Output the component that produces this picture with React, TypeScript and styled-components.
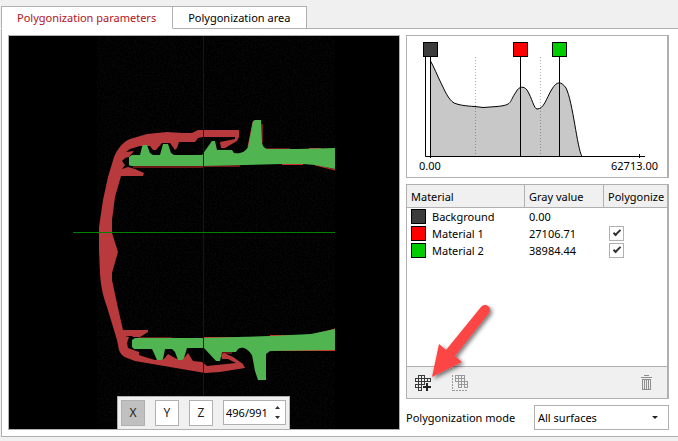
import React, { useState } from "react";
import styled, { createGlobalStyle } from "styled-components";

const LINE = "#b0b0b0";

const Global = createGlobalStyle`
  *, *::before, *::after { box-sizing: border-box; }
  html, body, #root { height: 100%; }
  body { margin: 0; background: #f0f0f0; color: #000; }
  body, button, input, select { font: 11px/16px "Noto Sans", "Open Sans", sans-serif; }
`;

const Page = styled.div`
  min-height: 100%;
  display: flex;
  flex-direction: column;
  padding: 6px 0 4px 1px;
`;

const Tabs = styled.div`
  display: flex;
  &::after { content: ""; flex: 1; border-bottom: 1px solid ${LINE}; }
`;

const Tab = styled.button<{ $active?: boolean }>`
  height: 23px;
  padding: 0 16px 0 15px;
  background: #fff;
  color: ${(p) => (p.$active ? "#b5121b" : "#000")};
  border: 1px solid ${LINE};
  border-left-width: ${(p) => (p.$active ? "1px" : "0")};
  border-bottom-color: ${(p) => (p.$active ? "#fff" : LINE)};
`;

const Panel = styled.main`
  flex: 1;
  display: grid;
  grid-template-columns: minmax(0, 392fr) minmax(0, 263fr);
  gap: 6px;
  padding: 6px 9px 6px 6px;
  background: #fff;
  border: solid ${LINE};
  border-width: 0 0 1px 1px;
`;

const Viewer = styled.section`
  display: flex;
  position: relative;
  background: #000;
  border: 1px solid ${LINE};
`;

const Slice = styled.svg`
  display: block;
  width: 100%;
  height: 100%;
`;

const AxisBar = styled.div`
  position: absolute;
  left: 108px;
  bottom: 0;
  display: flex;
  gap: 10px;
  padding: 3px;
  background: #f0f0f0;
  border: 1px solid ${LINE};
  border-bottom: 0;
`;

const AxisButton = styled.button<{ $on: boolean }>`
  width: 24px;
  height: 26px;
  padding: 0;
  font-size: 12px;
  color: #222;
  border: 1px solid ${LINE};
  background: ${(p) => (p.$on ? "#c0c0c0" : "#fff")};
`;

const Spinner = styled.div`
  display: flex;
  height: 25px;
  background: #fff;
  border: 1px solid ${LINE};
`;

const SpinInput = styled.input`
  width: 45px;
  padding: 0 0 0 2px;
  border: 0;
  outline: 0;
  background: transparent;
`;

const SpinButtons = styled.div`
  display: flex;
  flex-direction: column;
  justify-content: center;
  width: 16px;
`;

const SpinButton = styled.button`
  display: flex;
  align-items: center;
  justify-content: center;
  height: 10px;
  padding: 0;
  border: 0;
  background: none;
`;

const Side = styled.div`
  display: flex;
  flex-direction: column;
  gap: 6px;
`;

const Histogram = styled.section`
  border: 1px solid ${LINE};
  border-right-width: 2px;
  padding-bottom: 3px;
`;

const Plot = styled.svg`
  display: block;
  width: 100%;
`;

const Range = styled.div`
  display: flex;
  justify-content: space-between;
  padding: 0 9px 0 12px;
`;

const Materials = styled.section`
  flex: 1;
  display: flex;
  flex-direction: column;
  border: 1px solid ${LINE};
  border-right-width: 2px;
`;

const Table = styled.table`
  width: 100%;
  table-layout: fixed;
  border-collapse: separate;
  border-spacing: 0;
`;

const Head = styled.th<{ $width?: number }>`
  width: ${(p) => (p.$width ? p.$width + "px" : "auto")};
  height: 23px;
  padding: 2px 0 0 4px;
  text-align: left;
  font-weight: 400;
  white-space: nowrap;
  background: #f0f0f0;
  border-bottom: 1px solid ${LINE};
  &:not(:last-child) { border-right: 1px solid ${LINE}; }
`;

const Cell = styled.td`
  height: 17px;
  padding: 0 4px;
  line-height: 17px;
`;

const Name = styled.div`
  display: flex;
  align-items: center;
  gap: 6px;
`;

const Swatch = styled.span<{ $color: string }>`
  width: 15px;
  height: 15px;
  border: 1px solid #000;
  background: ${(p) => p.$color};
`;

const Check = styled.input`
  appearance: none;
  display: block;
  width: 15px;
  height: 15px;
  margin: 0 0 0 1px;
  border: 1px solid ${LINE};
  background: #fff;
  &:checked::after {
    content: "";
    display: block;
    width: 4px;
    height: 8px;
    margin: 1px 0 0 5px;
    border: solid #333;
    border-width: 0 2px 2px 0;
    transform: rotate(45deg);
  }
`;

const Tools = styled.div`
  position: relative;
  display: flex;
  align-items: center;
  gap: 21px;
  height: 32px;
  margin-top: auto;
  padding: 0 15px 0 8px;
  background: #f0f0f0;
  border-top: 1px solid ${LINE};
`;

const Tool = styled.button`
  display: flex;
  padding: 0;
  border: 0;
  background: none;
  &:last-of-type { margin-left: auto; }
`;

const Pointer = styled.svg`
  position: absolute;
  left: 20px;
  bottom: 14px;
  pointer-events: none;
`;

const Mode = styled.div`
  display: flex;
  align-items: center;
  justify-content: space-between;
`;

const SelectWrap = styled.div`
  display: grid;
  align-items: center;
  width: 135px;
`;

const Select = styled.select`
  grid-area: 1 / 1;
  appearance: none;
  width: 100%;
  height: 25px;
  padding: 0 20px 0 3px;
  border: 1px solid ${LINE};
  border-radius: 0;
  background: #fff;
  color: #000;
`;

const Arrow = styled.svg`
  grid-area: 1 / 1;
  justify-self: end;
  margin-right: 11px;
  pointer-events: none;
`;

const RED = "#b93a3c";
const GREEN = "#50b450";

const materials = [
  { name: "Background", gray: "0.00", color: "#3c3c3c", mesh: false },
  { name: "Material 1", gray: "27106.71", color: "#ff0000", mesh: true },
  { name: "Material 2", gray: "38984.44", color: "#00cc00", mesh: true },
];

const markers = [
  { x: 23, color: "#3c3c3c" },
  { x: 113, color: "#ff0000" },
  { x: 152, color: "#00cc00" },
];

const curve =
  "M23.5 25C27 31 30 39 34 47C38 55 41 63 47 67C52 69 58 70 68 70.5L76 71.5L90 70.5C106 69 102 66 109 56C112 50 117 50 120 54C125 62 127 73 130 73C137 73 139 63 145 53C150 45 154 45 159 52C166 66 170 112 175 120.5";

function CtSlice() {
  return (
    <Slice viewBox="9 36 390 393" preserveAspectRatio="xMidYMid meet" aria-label="Slice view">
      <defs>
        <filter id="grain" x="0" y="0" width="1" height="1">
          <feTurbulence type="fractalNoise" baseFrequency="0.6" numOctaves="2" seed="4" />
          <feColorMatrix values="0 0 0 0 1  0 0 0 0 1  0 0 0 0 1  0.5 0 0 0 -0.18" />
        </filter>
      </defs>
      <rect x="97" y="36" width="238" height="393" filter="url(#grain)" opacity="0.16" />
      <path
        fill={RED}
        d="M239 130H198L192 133L183 133L167 132L147 134L130 139C123 142 118 148 114 157L108 177L103 200L99 227V250L100 273C101 290 104 298 107 307L117 340L119 350C121 355 124 357 127 358L135 361L170 367L205 373L220 372L245 368L243 364L233 357L224 353L221 355L222 359H228L236 363L207 366L202 362L193 361L188 353L185 357L180 360L175 358L168 354L164 359L155 360L145 357L133 353L139 355V352L128 348L127 343L129 337L125 336H132L133 337H140L148 332V330H123L118 308L112 280V273L118 252L112 233V220L115 197L121 176H143L144 173L135 169L128 167L122 169L125 165L122 161L125 158L129 157L134 151L126 152L130 149L140 146H150L153 150H156L162 143H170L175 150L177 148L179 142H195L198 138L203 137H235V139L220 142L221 148H225L237 141L239 137Z"
      />
      <path
        fill="none"
        stroke="#d52a2a"
        d="M203 166H240M267 149H290M309 148.500H321M282 164.500H303M315 165L335 170M138 338H172M203 337.500H235M270 335.500H311L335 329M275 350.500H335M133 167H203M220 353L232 353M262 124V143M248 147L253 122"
      />
      <path
        fill={GREEN}
        d="M129 157L132 155H140L142 147L143 145H147L150 153L153 155H160L163 144H168L171 153L174 155H202L212 141H215L217 150H232L234 153C241 154 245 152 248 147L250 137L253 121L255 120H261L262 143C263 147 265 148 267 149H297L335 148V169L315 165L303 164H282L203 166H131L129 165Z"
      />
      <path
        fill={GREEN}
        d="M132 340L135 338H201L270 336L311 334L335 329V350L270 351L266 354V380H258L255 371L252 355C247 347 239 345 236 352H222L220 361H216L204 348H187L184 358L182 360H178L175 352L172 349H165L163 359L161 360H157L153 351L152 349H134L132 347Z"
      />
      <path stroke="#0a0a78" strokeWidth="1" shapeRendering="crispEdges" d="M203.500 36V429" />
      <path stroke="#008000" strokeWidth="1" shapeRendering="crispEdges" d="M73 232.500H335" />
    </Slice>
  );
}

function GrayPlot() {
  return (
    <Plot viewBox="0 0 260 122" aria-label="Gray value histogram">
      <path d={`${curve}H23.5Z`} fill="#c8c8c8" />
      <path stroke="#000" strokeOpacity="0.3" strokeDasharray="1 2" d="M68.500 21V120M133.500 21V120" />
      <path d={curve} fill="none" stroke="#000" />
      <path fill="none" stroke="#000" d="M18.500 20V120.500H238M232.500 118V123M23.500 118V122" />
      {markers.map((m) => (
        <g key={m.x} stroke="#000">
          <path d={`M${m.x + 0.5} 20V120`} />
          <rect x={m.x - 6.5} y="6.500" width="14" height="14" fill={m.color} />
        </g>
      ))}
    </Plot>
  );
}

type MeshProps = { cells: number[][]; color: string; children: React.ReactNode };

function Mesh({ cells, color, children }: MeshProps) {
  return (
    <svg width="16" height="16" viewBox="0 0 16 16" shapeRendering="crispEdges" fill="none" stroke={color}>
      {cells.map(([x, y]) => (
        <rect key={`${x}-${y}`} x={x * 3 + 0.5} y={y * 3 + 0.5} width="3" height="3" />
      ))}
      {children}
    </svg>
  );
}

const addCells = [
  [1, 0], [2, 0],
  [0, 1], [1, 1], [2, 1], [3, 1], [4, 1],
  [1, 2], [2, 2],
  [0, 3], [1, 3],
  [1, 4],
];

const fullCells = [
  [1, 0], [2, 0], [3, 0],
  [1, 1], [2, 1], [3, 1],
  [2, 2], [3, 2], [4, 2],
  [2, 3], [4, 3],
];

function Trash() {
  return (
    <svg width="11" height="15" viewBox="0 0 11 15" shapeRendering="crispEdges" fill="none" stroke="#8c8c8c">
      <path d="M0 2.500H11M3 .5H8M1.500 4V14.500H9.500V4M3.500 5V14M5.500 5V14M7.500 5V14M1 4.500H10" />
    </svg>
  );
}

export default function App() {
  const [axis, setAxis] = useState("X");
  const [slice, setSlice] = useState(496);
  return (
    <>
      <Global />
      <Page>
        <Tabs role="tablist">
          <Tab role="tab" aria-selected $active>Polygonization parameters</Tab>
          <Tab role="tab" aria-selected={false}>Polygonization area</Tab>
        </Tabs>
        <Panel>
          <Viewer>
            <CtSlice />
            <AxisBar>
              {["X", "Y", "Z"].map((a) => (
                <AxisButton key={a} $on={a === axis} onClick={() => setAxis(a)}>{a}</AxisButton>
              ))}
              <Spinner>
                <SpinInput aria-label="Slice" value={`${slice}/991`} readOnly />
                <SpinButtons>
                  <SpinButton aria-label="Next slice" onClick={() => setSlice(Math.min(991, slice + 1))}>
                    <svg width="5" height="3" viewBox="0 0 5 3"><path d="M0 3L2.500 0L5 3Z" fill="#333" /></svg>
                  </SpinButton>
                  <SpinButton aria-label="Previous slice" onClick={() => setSlice(Math.max(1, slice - 1))}>
                    <svg width="5" height="3" viewBox="0 0 5 3"><path d="M0 0H5L2.500 3Z" fill="#333" /></svg>
                  </SpinButton>
                </SpinButtons>
              </Spinner>
            </AxisBar>
          </Viewer>
          <Side>
            <Histogram>
              <GrayPlot />
              <Range><span>0.00</span><span>62713.00</span></Range>
            </Histogram>
            <Materials>
              <Table>
                <thead>
                  <tr>
                    <Head $width={118}>Material</Head>
                    <Head $width={79}>Gray value</Head>
                    <Head>Polygonize</Head>
                  </tr>
                </thead>
                <tbody>
                  {materials.map((m) => (
                    <tr key={m.name}>
                      <Cell><Name><Swatch $color={m.color} />{m.name}</Name></Cell>
                      <Cell>{m.gray}</Cell>
                      <Cell>{m.mesh && <Check type="checkbox" defaultChecked aria-label={`Polygonize ${m.name}`} />}</Cell>
                    </tr>
                  ))}
                </tbody>
              </Table>
              <Tools>
                <Tool aria-label="Add material">
                  <Mesh cells={addCells} color="#3a3a3a">
                    <path stroke="#222" strokeWidth="2" d="M12 8V16M8 12H16" />
                  </Mesh>
                </Tool>
                <Tool aria-label="Edit mesh" disabled>
                  <Mesh cells={fullCells} color="#999">
                    <path strokeDasharray="2 1" d="M.5 0V16M1 15.500H16" />
                  </Mesh>
                </Tool>
                <Tool aria-label="Delete material" disabled><Trash /></Tool>
                <Pointer width="72" height="80" viewBox="0 0 72 80">
                  <defs>
                    <filter id="shade" x="-20%" y="-20%" width="150%" height="150%">
                      <feDropShadow dx="2" dy="2" stdDeviation="2" floodOpacity="0.55" />
                    </filter>
                  </defs>
                  <path filter="url(#shade)" fill="#fc4444" d="M5 73L12 40L19 46L54 3A5 5 0 0 1 62 9L28 52L35 58Z" />
                </Pointer>
              </Tools>
            </Materials>
            <Mode>
              <label htmlFor="mode">Polygonization mode</label>
              <SelectWrap>
                <Select id="mode" defaultValue="All surfaces"><option>All surfaces</option></Select>
                <Arrow width="6" height="3" viewBox="0 0 6 3"><path d="M0 0H6L3 3Z" fill="#222" /></Arrow>
              </SelectWrap>
            </Mode>
          </Side>
        </Panel>
      </Page>
    </>
  );
}
